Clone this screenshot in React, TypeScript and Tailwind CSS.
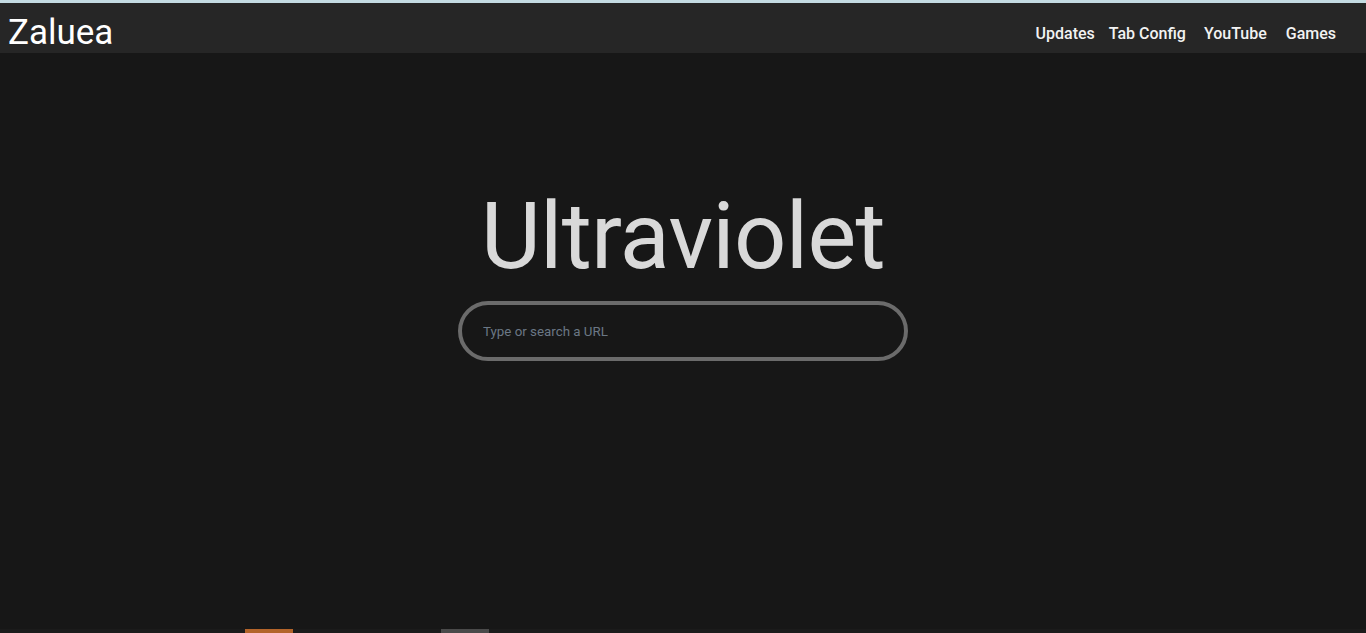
const links = [
  { text: "Updates", gap: "" },
  { text: "Tab Config", gap: "ml-[14px]" },
  { text: "YouTube", gap: "ml-[18px]" },
  { text: "Games", gap: "ml-[19px]" },
];

export default function App() {
  return (
    <div className="flex h-[633px] flex-col overflow-hidden bg-[#171717] font-['Roboto',sans-serif]">
      <div className="h-[3px] bg-[#c4dbe2]" />
      <header className="flex h-[50px] items-end justify-between bg-[#262626] pl-2 pr-[30px]">
        <h1 className="text-[35px] leading-[40px] font-normal text-white">Zaluea</h1>
        <nav className="flex pb-[7px]">
          {links.map((link) => (
            <a
              key={link.text}
              href="#"
              className={`${link.gap} text-base leading-6 font-medium text-[#f2f2f2]`}
            >
              {link.text}
            </a>
          ))}
        </nav>
      </header>
      <main className="flex flex-1 flex-col items-center pt-[138px]">
        <h2 className="text-[92px] leading-none font-normal tracking-[-0.7px] text-[#d9d9d9]">
          Ultraviolet
        </h2>
        <input
          type="text"
          placeholder="Type or search a URL"
          className="mt-[18px] h-[60px] w-[450px] rounded-full border-4 border-[#6b6b6b] bg-transparent pl-[21px] text-[13.33px] text-[#d9d9d9] outline-none placeholder:text-[#6b7785]"
        />
      </main>
      <div className="flex h-[4px] bg-[#1b1b1b]">
        <div className="ml-[245px] w-[48px] bg-[#b3642a]" />
        <div className="ml-[148px] w-[48px] bg-[#4a4a4a]" />
      </div>
    </div>
  );
}
